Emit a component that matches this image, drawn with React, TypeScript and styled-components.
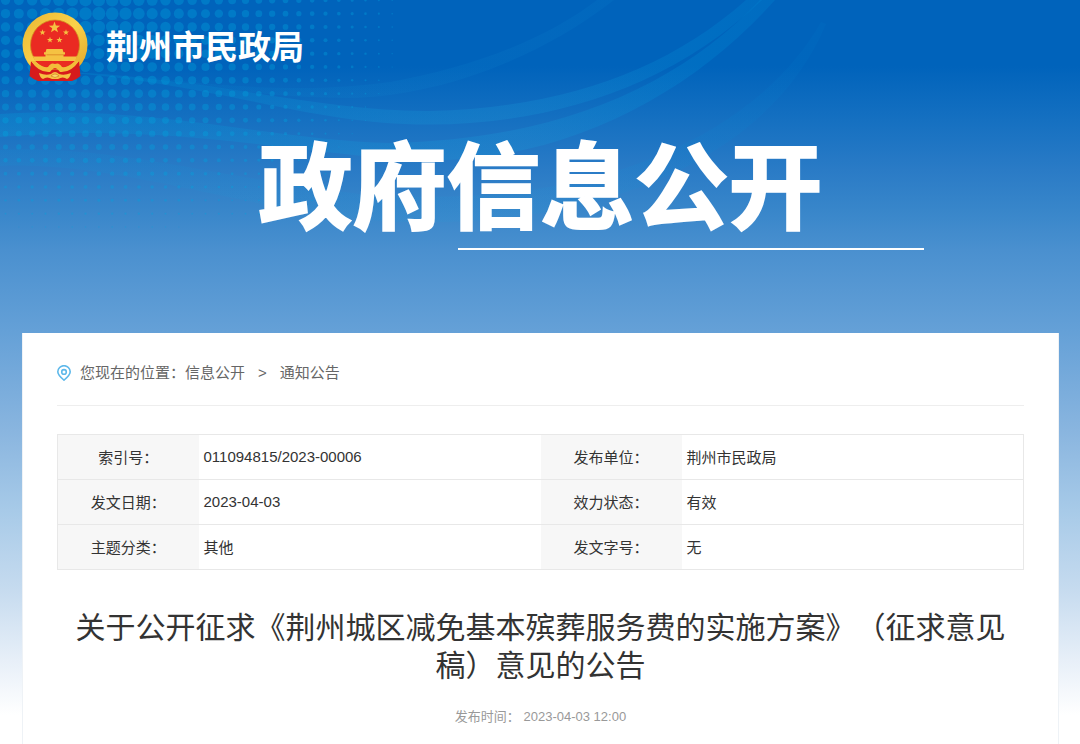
import React from "react";
import styled, { createGlobalStyle } from "styled-components";

const GlobalStyle = createGlobalStyle`
  * { box-sizing: border-box; }
  body {
    margin: 0;
    background: #fff;
    color: #333;
    font-family: "Liberation Sans", "Noto Sans CJK SC", sans-serif;
    font-size: 15px;
    text-spacing-trim: space-all;
  }
`;

const Page = styled.div`
  position: relative;
  display: flex;
  flex-direction: column;
  min-height: 100vh;
  padding: 0 21px 0 22px;
  background: linear-gradient(
    180deg,
    #0063bb 0,
    #0063bb 66px,
    #1570c1 120px,
    #2a7bc6 170px,
    #3886ca 210px,
    #4a90cf 250px,
    #64a0d7 330px,
    #89b5df 430px,
    #a7cae8 510px,
    #c6dbef 590px,
    #e7eff8 660px,
    #ffffff 715px
  );
`;

const Waves = styled.svg`
  position: absolute;
  top: 0;
  left: 0;
  width: 860px;
  height: 330px;
  pointer-events: none;
`;

const Masthead = styled.header`
  position: relative;
  display: flex;
  align-items: center;
  gap: 18px;
  height: 96px;
`;

const Emblem = styled.svg`
  width: 66px;
  height: 72px;
  flex: none;
`;

const SiteName = styled.a`
  color: #fff;
  font-size: 33px;
  line-height: 48px;
  font-weight: 700;
  text-decoration: none;
`;

const Banner = styled.div`
  position: relative;
  height: 237px;
  padding-top: 30px;
`;

const BannerTitle = styled.h1`
  margin: 0;
  color: #fff;
  font-size: 94px;
  line-height: 128px;
  font-weight: 700;
  text-align: center;
  -webkit-text-stroke: 2px #fff;
`;

const BannerRule = styled.hr`
  position: absolute;
  top: 152px;
  left: 42%;
  width: 45%;
  height: 2px;
  margin: 0;
  border: 0;
  background: #fff;
`;

const Card = styled.main`
  position: relative;
  flex: 1;
  padding: 0 34px 16px;
  border: 1px solid #eef2f6;
  border-width: 0 1px;
  background: #fff;
`;

const Breadcrumb = styled.nav`
  display: flex;
  align-items: center;
  height: 73px;
  padding-top: 8px;
  border-bottom: 1px solid #eee;
  color: #666;
  line-height: 20px;
`;

const Pin = styled.svg`
  width: 14px;
  height: 16px;
  margin-right: 9px;
`;

const Crumb = styled.a`
  color: inherit;
  text-decoration: none;
`;

const Separator = styled.span`
  margin: 0 13px;
`;

const InfoTable = styled.table`
  width: 100%;
  margin-top: 28px;
  border: 1px solid #e8e8e8;
  border-collapse: collapse;
  table-layout: fixed;

  tr + tr { border-top: 1px solid #e8e8e8; }
`;

const Label = styled.th`
  width: 141px;
  height: 45px;
  padding: 0 0 2px;
  background: #f7f7f7;
  font-weight: 400;
  text-align: center;
`;

const Value = styled.td`
  padding: 0 5px 2px;
`;

const Title = styled.h2`
  margin: 39px 0 0;
  font-size: 30px;
  line-height: 38px;
  font-weight: 400;
  text-align: center;
`;

const Published = styled.p`
  margin: 22px 0 0;
  color: #999;
  font-size: 13px;
  line-height: 20px;
  text-align: center;
`;

const PITCH = 40 / 3;

function Dots() {
  const dots: React.ReactElement[] = [];
  for (let row = 0; row < 18; row++) {
    for (let col = 0; col < 31; col++) {
      const x = 5.5 + col * PITCH;
      const y = 0.3 + row * PITCH;
      const d = Math.hypot((x - 100) / 330, (y - 15) / 240);
      const r = Math.max(6.6 * (1 - d), x < 330 && y < 220 ? 0.9 : 0);
      if (r > 0.5) {
        dots.push(<circle key={`${row}-${col}`} cx={x} cy={y} r={r} />);
      }
    }
  }
  return <g fill="#00a4de" fillOpacity={0.36}>{dots}</g>;
}

function Backdrop() {
  return (
    <Waves viewBox="0 0 860 330" aria-hidden="true">
      <defs>
        <linearGradient id="band" gradientUnits="userSpaceOnUse" x1="0" y1="0" x2="840" y2="0">
          <stop offset="0" stopColor="#00a8e0" stopOpacity="0.22" />
          <stop offset="0.2" stopColor="#00a8e0" stopOpacity="0.17" />
          <stop offset="0.6" stopColor="#1ba0dc" stopOpacity="0.22" />
          <stop offset="0.85" stopColor="#0090d8" stopOpacity="0.24" />
          <stop offset="1" stopColor="#0090d8" stopOpacity="0.16" />
        </linearGradient>
      </defs>
      <Dots />
      <g fill="url(#band)">
        <path d="M60 72 C200 76 320 112 430 111 C560 108 665 72 746 0 L762 0 C670 88 550 124 430 124.500 C310 125 220 84 60 72 Z" />
        <path d="M0 114 C150 104 270 140 390 143 C560 140 680 84 760 0 L775 0 C690 96 560 164 420 160 C290 154 170 122 0 137 Z" />
        <path opacity="0.4" d="M140 76 C260 92 330 90 390 82 C480 66 550 36 597 0 L614 0 C540 58 440 96 350 98 C270 98 220 88 140 76 Z" />
        <path opacity="0.4" d="M0 150 C110 144 230 180 360 194 C600 214 760 130 821 22 L826 24 C772 154 610 228 400 222 C260 216 120 160 0 166 Z" />
      </g>
    </Waves>
  );
}

function starPoints(cx: number, cy: number, r: number) {
  return Array.from({ length: 10 }, (_, i) => {
    const a = -Math.PI / 2 + (i * Math.PI) / 5;
    const rad = i % 2 ? r * 0.4 : r;
    return `${(cx + rad * Math.cos(a)).toFixed(2)},${(cy + rad * Math.sin(a)).toFixed(2)}`;
  }).join(" ");
}

function NationalEmblem() {
  return (
    <Emblem viewBox="0 0 66 72" role="img" aria-label="国徽">
      <defs>
        <linearGradient id="gold" x1="0" y1="0" x2="1" y2="1">
          <stop offset="0" stopColor="#e9b632" />
          <stop offset="0.5" stopColor="#fbd24a" />
          <stop offset="1" stopColor="#dfa324" />
        </linearGradient>
      </defs>
      <ellipse cx="33" cy="33" rx="32.500" ry="32.500" fill="url(#gold)" />
      <ellipse cx="33" cy="33" rx="24.500" ry="25" fill="#ea2a22" stroke="#cf8d20" strokeWidth="0.800" />
      <g fill="#f5c242">
        <polygon points={starPoints(32.500, 15.500, 6)} />
        <polygon points={starPoints(20.500, 20.500, 3.200)} />
        <polygon points={starPoints(44, 20.500, 3.200)} />
        <polygon points={starPoints(28, 28, 3.200)} />
        <polygon points={starPoints(37.500, 28, 3.200)} />
        <path d="M24.500 37 h16 l1 3.200 h1.500 v2.300 h-1.500 v3 h-18 v-3 h-1.500 v-2.300 h1.500 Z" />
        <path d="M11 44.500 H55 L53 49 H13 Z" />
      </g>
      <path d="M24.500 42.800 H41.500" stroke="#d67b1e" strokeWidth="0.700" />
      <path d="M13 49 H53 Q48 54 41 55 Q33 49 25 55 Q18 54 13 49 Z" fill="#ea2a22" />
      <path d="M9 49 Q16 58 27 58 L39 58 Q50 58 57 49 L58.500 64 Q54 68 50 69 L16 69 Q12 68 7.500 64 Z" fill="#d71b1c" />
      <path d="M9 49 L13 49 Q19 56 26 55 Q29 50 33 52 Q37 50 40 55 Q47 56 53 49 L57 49 Q49 61 38 60 Q35 56 33 56 Q31 56 28 60 Q17 61 9 49 Z" fill="#f2bd3a" />
      <path d="M17 61 Q24 64 29 62 Q33 58 37 62 Q42 64 49 61 Q48 66 45 67 Q41 64 36 67 H30 Q25 64 21 67 Q18 66 17 61 Z" fill="#f5c242" />
      <path d="M29 64 Q33 60 37 64 Q33 67 29 64 Z" fill="#fbd86a" stroke="#c9711f" strokeWidth="0.600" />
    </Emblem>
  );
}

const rows = [
  ["索引号：", "011094815/2023-00006", "发布单位：", "荆州市民政局"],
  ["发文日期：", "2023-04-03", "效力状态：", "有效"],
  ["主题分类：", "其他", "发文字号：", "无"],
];

export default function App() {
  return (
    <>
      <GlobalStyle />
      <Page>
        <Backdrop />
        <Masthead>
          <NationalEmblem />
          <SiteName href="#">荆州市民政局</SiteName>
        </Masthead>
        <Banner>
          <BannerTitle>政府信息公开</BannerTitle>
          <BannerRule />
        </Banner>
        <Card>
          <Breadcrumb aria-label="您现在的位置">
            <Pin viewBox="0 0 14 16" fill="none" stroke="#5db8ea" strokeWidth="1.600" aria-hidden="true">
              <path d="M7 15.200 C4 12.500 0.800 9.800 0.800 6.700 A6.200 6 0 0 1 13.200 6.700 C13.200 9.800 10 12.500 7 15.200 Z" />
              <circle cx="7" cy="6.900" r="2.300" />
            </Pin>
            <span>您现在的位置：</span>
            <Crumb href="#">信息公开</Crumb>
            <Separator>&gt;</Separator>
            <Crumb href="#">通知公告</Crumb>
          </Breadcrumb>
          <InfoTable>
            <tbody>
              {rows.map(([l1, v1, l2, v2]) => (
                <tr key={l1}>
                  <Label scope="row">{l1}</Label>
                  <Value>{v1}</Value>
                  <Label scope="row">{l2}</Label>
                  <Value>{v2}</Value>
                </tr>
              ))}
            </tbody>
          </InfoTable>
          <Title>关于公开征求《荆州城区减免基本殡葬服务费的实施方案》（征求意见稿）意见的公告</Title>
          <Published>发布时间： 2023-04-03 12:00</Published>
        </Card>
      </Page>
    </>
  );
}
